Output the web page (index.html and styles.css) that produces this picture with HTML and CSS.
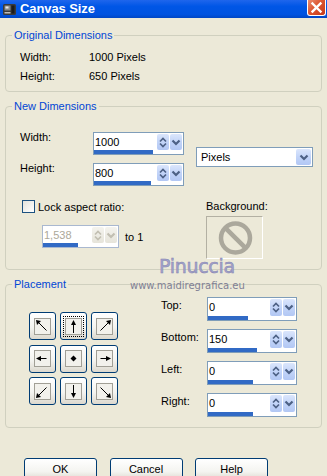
FILE: index.html
```html
<!DOCTYPE html>
<html>
<head>
<meta charset="utf-8">
<link rel="stylesheet" href="styles.css">
</head>
<body>
<svg class="defs" width="0" height="0" aria-hidden="true">
  <defs>
    <symbol id="ud" viewBox="0 0 12 15"><path d="M3 6.5 L6 3.5 L9 6.5 M3 8.5 L6 11.5 L9 8.5" fill="none" stroke-width="1.7"/></symbol>
    <symbol id="dd" viewBox="0 0 12 15"><path d="M2.5 5.5 L6 9 L9.5 5.5" fill="none" stroke-width="2.2"/></symbol>
    <symbol id="box" viewBox="0 0 17 17"><rect x="0.5" y="0.5" width="16" height="16" fill="#F2F1EC" stroke="#A19F96"/></symbol>
  </defs>
</svg>
<div class="window">
  <div class="titlebar">
    <svg class="app-icon" viewBox="0 0 15 15">
      <rect x="1" y="2" width="13" height="11" rx="1.5" fill="#3a3a3a"/>
      <rect x="2.5" y="3.5" width="6" height="5" fill="#8a8a8a"/>
      <rect x="3.5" y="4.5" width="3" height="2" fill="#e8e8e8"/>
      <rect x="9.5" y="3.5" width="3" height="8" fill="#1c1c1c"/>
      <rect x="2.5" y="10" width="6" height="1.5" fill="#bdbdbd"/>
    </svg>
    <span class="title">Canvas Size</span>
    <div class="close">
      <svg width="13" height="13" viewBox="0 0 13 13"><path d="M2.5 2.5 L10.5 10.5 M10.5 2.5 L2.5 10.5" stroke="#fff" stroke-width="2.4" stroke-linecap="square"/></svg>
    </div>
  </div>

  <div class="content">
    <fieldset class="group">
      <legend>Original Dimensions</legend>
      <div class="orig-body">
        <div class="info-row"><span class="info-label">Width:</span><span>1000 Pixels</span></div>
        <div class="info-row"><span class="info-label">Height:</span><span>650 Pixels</span></div>
      </div>
    </fieldset>

    <fieldset class="group">
      <legend>New Dimensions</legend>
      <div class="new-body">
        <div class="dims">
          <div class="dim-fields">
            <div class="field-row">
              <span class="field-label">Width:</span>
              <div class="spin spin-dim">
                <div class="spin-top"><span class="spin-val">1000</span><span class="spin-btn"><svg><use href="#ud"/></svg></span><span class="spin-btn"><svg><use href="#dd"/></svg></span></div>
                <div class="spin-bar"><div class="spin-fill" style="width:59px"></div></div>
              </div>
            </div>
            <div class="field-row">
              <span class="field-label">Height:</span>
              <div class="spin spin-dim">
                <div class="spin-top"><span class="spin-val">800</span><span class="spin-btn"><svg><use href="#ud"/></svg></span><span class="spin-btn"><svg><use href="#dd"/></svg></span></div>
                <div class="spin-bar"><div class="spin-fill" style="width:57px"></div></div>
              </div>
            </div>
          </div>
          <div class="select">
            <span class="select-val">Pixels</span>
            <span class="select-btn"><svg><use href="#dd"/></svg></span>
          </div>
        </div>
        <div class="lock">
          <div class="lock-left">
            <div class="check-row"><span class="checkbox"></span><span>Lock aspect ratio:</span></div>
            <div class="ratio-row">
              <div class="spin spin-ratio disabled">
                <div class="spin-top"><span class="spin-val">1,538</span><span class="spin-btn"><svg><use href="#ud"/></svg></span><span class="spin-btn"><svg><use href="#dd"/></svg></span></div>
                <div class="spin-bar"><div class="spin-fill" style="width:35px"></div></div>
              </div>
              <span class="to1">to 1</span>
            </div>
          </div>
          <div class="bg">
            <div class="bg-label">Background:</div>
            <div class="bg-box">
              <svg width="55" height="41" viewBox="0 0 55 41">
                <circle cx="28.5" cy="21" r="14.5" fill="none" stroke="#ABA89C" stroke-width="4.5"/>
                <path d="M18.3 10.8 L38.7 31.2" stroke="#ABA89C" stroke-width="4.5"/>
              </svg>
            </div>
          </div>
        </div>
      </div>
    </fieldset>

    <fieldset class="group">
      <legend>Placement</legend>
      <div class="place-body">
        <div class="arrows">
          <div class="pbtn"><svg viewBox="0 0 17 17"><use href="#box"/><path d="M3.5 3.5 L12.5 12.5" stroke="#000"/><polygon points="2,2 7,3 3,7"/></svg></div>
          <div class="pbtn"><svg class="focus" viewBox="0 0 17 17"><use href="#box"/><path d="M8.5 4 L8.5 15" stroke="#000"/><polygon points="8.5,2 6,7 11,7"/></svg></div>
          <div class="pbtn"><svg viewBox="0 0 17 17"><use href="#box"/><path d="M13.5 3.5 L4.5 12.5" stroke="#000"/><polygon points="15,2 10,3 14,7"/></svg></div>
          <div class="pbtn"><svg viewBox="0 0 17 17"><use href="#box"/><path d="M4 8.5 L12.5 8.5" stroke="#000"/><polygon points="2,8.5 7,6 7,11"/></svg></div>
          <div class="pbtn"><svg viewBox="0 0 17 17"><use href="#box"/><polygon points="8.5,5.5 11.5,8.5 8.5,11.5 5.5,8.5"/></svg></div>
          <div class="pbtn"><svg viewBox="0 0 17 17"><use href="#box"/><path d="M4.5 8.5 L13 8.5" stroke="#000"/><polygon points="15,8.5 10,6 10,11"/></svg></div>
          <div class="pbtn"><svg viewBox="0 0 17 17"><use href="#box"/><path d="M3.5 13.5 L12.5 4.5" stroke="#000"/><polygon points="2,15 3,10 7,14"/></svg></div>
          <div class="pbtn"><svg viewBox="0 0 17 17"><use href="#box"/><path d="M8.5 2 L8.5 13" stroke="#000"/><polygon points="8.5,15 6,10 11,10"/></svg></div>
          <div class="pbtn"><svg viewBox="0 0 17 17"><use href="#box"/><path d="M4.5 4.5 L13.5 13.5" stroke="#000"/><polygon points="15,15 10,14 14,10"/></svg></div>
        </div>
        <div class="offsets">
          <div class="offset-row">
            <span class="offset-label">Top:</span>
            <div class="spin spin-off">
              <div class="spin-top"><span class="spin-val">0</span><span class="spin-btn"><svg><use href="#ud"/></svg></span><span class="spin-btn"><svg><use href="#dd"/></svg></span></div>
              <div class="spin-bar"><div class="spin-fill" style="width:40px"></div></div>
            </div>
          </div>
          <div class="offset-row">
            <span class="offset-label">Bottom:</span>
            <div class="spin spin-off">
              <div class="spin-top"><span class="spin-val">150</span><span class="spin-btn"><svg><use href="#ud"/></svg></span><span class="spin-btn"><svg><use href="#dd"/></svg></span></div>
              <div class="spin-bar"><div class="spin-fill" style="width:49px"></div></div>
            </div>
          </div>
          <div class="offset-row">
            <span class="offset-label">Left:</span>
            <div class="spin spin-off">
              <div class="spin-top"><span class="spin-val">0</span><span class="spin-btn"><svg><use href="#ud"/></svg></span><span class="spin-btn"><svg><use href="#dd"/></svg></span></div>
              <div class="spin-bar"><div class="spin-fill" style="width:45px"></div></div>
            </div>
          </div>
          <div class="offset-row">
            <span class="offset-label">Right:</span>
            <div class="spin spin-off">
              <div class="spin-top"><span class="spin-val">0</span><span class="spin-btn"><svg><use href="#ud"/></svg></span><span class="spin-btn"><svg><use href="#dd"/></svg></span></div>
              <div class="spin-bar"><div class="spin-fill" style="width:45px"></div></div>
            </div>
          </div>
        </div>
      </div>
    </fieldset>

    <div class="buttons">
      <div class="btn">OK</div>
      <div class="btn">Cancel</div>
      <div class="btn">Help</div>
    </div>
  </div>

  <div class="watermark">
    <div class="wm-name">Pinuccia</div>
    <div class="wm-url">www.maidiregrafica.eu</div>
  </div>
</div>
</body>
</html>
```

FILE: styles.css
```css
* { box-sizing: border-box; }

html, body {
  margin: 0;
  padding: 0;
  width: 327px;
  height: 476px;
  overflow: hidden;
}

body {
  background: #ECE9D8;
  font-family: "Liberation Sans", Arial, sans-serif;
  font-size: 11px;
  color: #000;
}

.defs { position: absolute; width: 0; height: 0; }

.window {
  position: relative;
  width: 327px;
  height: 476px;
  overflow: hidden;
}

/* Title bar */
.titlebar {
  height: 18px;
  display: flex;
  align-items: center;
  background: linear-gradient(#1f66ec, #0056e6 35%, #0053e0 80%, #0046c4);
  color: #fff;
}

.app-icon {
  width: 15px;
  height: 15px;
  margin: 0 3px 0 2px;
  flex: none;
}

.title {
  flex: 1;
  font-weight: bold;
  font-size: 13px;
  line-height: 18px;
  letter-spacing: -0.1px;
}

.close {
  align-self: flex-start;
  width: 19px;
  height: 16px;
  margin-right: 1px;
  border: 1px solid #fff;
  border-top: none;
  border-radius: 0 0 3px 3px;
  background: linear-gradient(135deg, #eb8f73, #dc5530 45%, #c4391a);
  display: flex;
  align-items: center;
  justify-content: center;
}

/* Content */
.content {
  padding: 11px 5px 0;
}

.group {
  margin: 0;
  padding: 0;
  border: 1px solid #D0D0BF;
  border-radius: 4px;
  min-width: 0;
}

.group + .group { margin-top: 8px; }

.group legend {
  margin-left: 6px;
  padding: 0 2px;
  color: #0046D5;
  line-height: 13px;
}

.orig-body {
  display: flex;
  flex-direction: column;
  gap: 6px;
  padding: 9px 0 8px 14px;
}

.info-row { display: flex; line-height: 13px; }
.info-label { width: 69px; }

/* New dimensions */
.new-body { padding: 19px 0 10px 14px; }

.dims { display: flex; align-items: flex-start; }

.dim-fields {
  display: flex;
  flex-direction: column;
  gap: 8px;
}

.field-row { display: flex; align-items: flex-start; }

.field-label {
  width: 73px;
  line-height: 13px;
  margin-top: -1px;
}

/* spin box */
.spin {
  display: flex;
  flex-direction: column;
  border: 1px solid #7F9DB9;
  background: #fff;
  overflow: hidden;
}

.spin-dim { width: 91px; height: 23px; }
.spin-ratio { width: 77px; height: 23px; }
.spin-off { width: 90px; height: 24px; }

.spin-top {
  flex: 1 1 0;
  min-height: 0;
  display: flex;
  align-items: stretch;
  padding: 1px 1px 0 0;
  gap: 1px;
}

.spin-val {
  flex: 1;
  line-height: 16px;
  padding-left: 1px;
}

.spin-btn {
  width: 12px;
  border-radius: 2px;
  background: linear-gradient(#dbe6fc, #c2d4f8 50%, #b2c7f4);
  stroke: #4D6185;
  display: flex;
  align-items: center;
  overflow: hidden;
}

.spin-btn svg { width: 12px; height: 15px; display: block; flex: none; }

.spin-bar { height: 4px; flex: none; background: #fff; }
.spin-fill { height: 4px; background: #316AC5; }

.disabled { border-color: #A9B8D0; }
.disabled .spin-val { color: #ACA899; }
.disabled .spin-btn {
  background: linear-gradient(#f4f3ee, #e6e4da);
  stroke: #C2BFB2;
}

/* select */
.select {
  margin: 15px 0 0 12px;
  width: 117px;
  height: 20px;
  border: 1px solid #7F9DB9;
  background: #fff;
  display: flex;
  align-items: stretch;
  padding: 1px 1px 1px 0;
}

.select-val {
  flex: 1;
  padding-left: 4px;
  line-height: 16px;
}

.select-btn {
  width: 15px;
  border-radius: 2px;
  background: linear-gradient(#dbe6fc, #c2d4f8 50%, #b2c7f4);
  stroke: #4D6185;
  display: flex;
  align-items: center;
  justify-content: center;
}

.select-btn svg { width: 12px; height: 15px; display: block; flex: none; }

/* lock aspect */
.lock { display: flex; margin-top: 14px; }

.lock-left { width: 186px; }

.check-row {
  display: flex;
  align-items: center;
  height: 13px;
  margin-left: 2px;
}

.checkbox {
  width: 13px;
  height: 13px;
  margin-right: 3px;
  border: 1px solid #1C5180;
  background: linear-gradient(135deg, #E2E2DC, #ffffff);
}

.ratio-row {
  display: flex;
  align-items: center;
  margin: 12px 0 0 22px;
}

.to1 { margin-left: 6px; }

.bg-label { line-height: 13px; }

.bg-box {
  margin-top: 3px;
  width: 57px;
  height: 43px;
  border: 1px solid;
  border-color: #B3B0A3 #fff #fff #B3B0A3;
}

.bg-box svg { display: block; }

/* placement */
.place-body {
  display: flex;
  padding: 0 0 10px 23px;
}

.arrows {
  display: grid;
  grid-template-columns: repeat(3, 27px);
  grid-auto-rows: 28px;
  column-gap: 4px;
  row-gap: 4.5px;
  margin-top: 21px;
  align-self: flex-start;
}

.pbtn {
  border: 1px solid #003C74;
  border-radius: 3px;
  background: linear-gradient(#ffffff, #f4f4f0 55%, #dcd8ce);
  display: flex;
  align-items: center;
  justify-content: center;
}

.pbtn svg { width: 17px; height: 17px; display: block; }

.pbtn .focus {
  outline: 1px dotted #000;
  outline-offset: 1px;
}

.offsets {
  display: flex;
  flex-direction: column;
  gap: 8px;
  margin: 6px 0 0 43px;
}

.offset-row { display: flex; align-items: flex-start; }

.offset-label {
  width: 46px;
  line-height: 13px;
  margin-top: 2px;
}

/* bottom buttons */
.buttons {
  display: flex;
  gap: 12.5px;
  margin-top: 30px;
  padding-left: 19px;
}

.btn {
  width: 73px;
  height: 23px;
  border: 1px solid #003C74;
  border-radius: 3px;
  background: linear-gradient(#ffffff, #f4f4f0 60%, #dcd8ce);
  text-align: center;
  line-height: 21px;
}

/* watermark */
.watermark { position: absolute; left: 0; top: 0; pointer-events: none; }

.wm-name {
  position: absolute;
  left: 159px;
  top: 255px;
  font-family: "DejaVu Sans", Verdana, sans-serif;
  font-size: 19px;
  line-height: 22px;
  letter-spacing: -0.3px;
  color: #A4A4CC;
  -webkit-text-stroke: 0.5px #8383B0;
  white-space: nowrap;
}

.wm-url {
  position: absolute;
  left: 130px;
  top: 280px;
  font-family: "DejaVu Sans", Verdana, sans-serif;
  font-size: 10px;
  line-height: 12px;
  color: #7F7F94;
  white-space: nowrap;
}
```
